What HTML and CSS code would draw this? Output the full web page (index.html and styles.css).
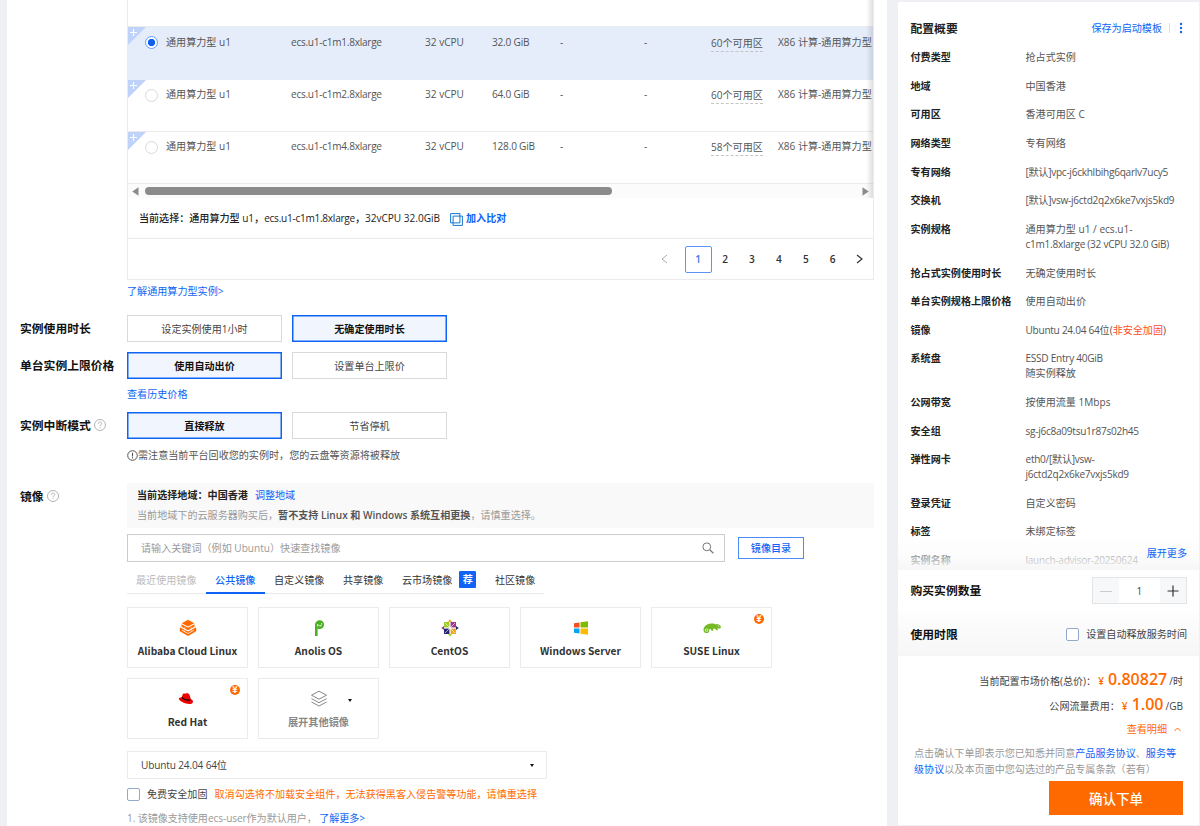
FILE: index.html
```
<!DOCTYPE html>
<html lang="zh-CN">
<head>
<meta charset="utf-8">
<title>云服务器 ECS 购买</title>
<link rel="stylesheet" href="styles.css">
</head>
<body>
<div class="main">
    <div class="spec-table">
        <div class="spec-rows">
            <div class="spec-row spacer"></div>
            <div class="spec-row selected">
                <span class="corner"><svg width="18" height="18" viewBox="0 0 18 18"><path d="M0 0H18L0 18z" fill="#bfd3fa"/><path d="M2 5.5h7M5.5 2v7" stroke="#fff" stroke-width="1.1"/></svg></span>
                <span class="name"><i class="radio on"></i>通用算力型 u1</span>
                <span class="id">ecs.u1-c1m1.8xlarge</span><span>32 vCPU</span><span class="mem">32.0 GiB</span><span>-</span><span>-</span>
                <span><u>60个可用区</u></span><span>X86 计算-通用算力型</span>
            </div>
            <div class="spec-row">
                <span class="corner"><svg width="18" height="18" viewBox="0 0 18 18"><path d="M0 0H18L0 18z" fill="#bfd3fa"/><path d="M2 5.5h7M5.5 2v7" stroke="#fff" stroke-width="1.1"/></svg></span>
                <span class="name"><i class="radio"></i>通用算力型 u1</span>
                <span class="id">ecs.u1-c1m2.8xlarge</span><span>32 vCPU</span><span class="mem">64.0 GiB</span><span>-</span><span>-</span>
                <span><u>60个可用区</u></span><span>X86 计算-通用算力型</span>
            </div>
            <div class="spec-row">
                <span class="corner"><svg width="18" height="18" viewBox="0 0 18 18"><path d="M0 0H18L0 18z" fill="#bfd3fa"/><path d="M2 5.5h7M5.5 2v7" stroke="#fff" stroke-width="1.1"/></svg></span>
                <span class="name"><i class="radio"></i>通用算力型 u1</span>
                <span class="id">ecs.u1-c1m4.8xlarge</span><span>32 vCPU</span><span class="mem">128.0 GiB</span><span>-</span><span>-</span>
                <span><u>58个可用区</u></span><span>X86 计算-通用算力型</span>
            </div>
            <div class="scrollbar">
                <svg width="7" height="9" viewBox="0 0 7 9"><path d="M6.500.3v8.400L.3 4.500z" fill="#8b8b8b"/></svg>
                <div class="track"><div class="thumb"></div></div>
                <svg width="7" height="9" viewBox="0 0 7 9"><path d="M.5.3v8.400l6.200-4.200z" fill="#8b8b8b"/></svg>
            </div>
        </div>
        <div class="current">
            <span class="current-text">当前选择：通用算力型 u1，<span class="id">ecs.u1-c1m1.8xlarge</span>，32vCPU 32.0GiB</span>
            <svg width="13" height="13" viewBox="0 0 13 13" fill="none" stroke="#1677d2"><path d="M.6.6h9.300v9.300H.6z"/><path d="M3.100 3.100h9.300v9.300H3.100z"/></svg>
            <a>加入比对</a>
        </div>
        <div class="pager">
            <span><svg width="7" height="10" viewBox="0 0 7 10" fill="none" stroke="#aaa"><path d="M6 1L1 5l5 4"/></svg></span>
            <span class="active">1</span><span>2</span><span>3</span><span>4</span><span>5</span><span>6</span>
            <span><svg width="7" height="10" viewBox="0 0 7 10" fill="none" stroke="#333" stroke-width="1.2"><path d="M1 1l5 4-5 4"/></svg></span>
        </div>
    </div>
    <a class="learn">了解通用算力型实例&gt;</a>

    <div class="field usage">
        <label>实例使用时长</label>
        <div class="options"><span>设定实例使用1小时</span><span class="active">无确定使用时长</span></div>
    </div>
    <div class="field price">
        <label>单台实例上限价格</label>
        <div class="options"><span class="active">使用自动出价</span><span>设置单台上限价</span></div>
    </div>
    <a class="history">查看历史价格</a>
    <div class="field">
        <label>实例中断模式<svg width="12" height="12" viewBox="0 0 12 12" fill="none" stroke="#b3b3b3"><circle cx="6" cy="6" r="5.5"/><path d="M4.3 4.8c0-2.3 3.4-2.2 3.4-.2C7.700 5.800 6 5.800 6 7.200M6 8.200v1"/></svg></label>
        <div class="options"><span class="active">直接释放</span><span>节省停机</span></div>
    </div>
    <div class="notice">
        <svg width="11" height="11" viewBox="0 0 11 11" fill="none" stroke="#555"><circle cx="5.500" cy="5.500" r="4.800"/><path d="M5.500 2.700v3.700M5.500 7.300v1.100" stroke-width="1.100"/></svg>需注意当前平台回收您的实例时，您的云盘等资源将被释放
    </div>

    <div class="field image">
        <label>镜像<svg width="12" height="12" viewBox="0 0 12 12" fill="none" stroke="#b3b3b3"><circle cx="6" cy="6" r="5.5"/><path d="M4.3 4.8c0-2.3 3.4-2.2 3.4-.2C7.700 5.800 6 5.800 6 7.200M6 8.200v1"/></svg></label>
        <div class="image-body">
            <div class="region">
                <p><b>当前选择地域：中国香港</b><a>调整地域</a></p>
                <p class="hint">当前地域下的云服务器购买后，<b>暂不支持 Linux 和 Windows 系统互相更换</b>，请慎重选择。</p>
            </div>
            <div class="search">
                <div class="search-box">请输入关键词（例如 Ubuntu）快速查找镜像
                    <svg width="12" height="12" viewBox="0 0 12 12" fill="none" stroke="#777"><circle cx="4.800" cy="4.800" r="3.900"/><path d="M7.700 7.700l3.700 3.600" stroke-width="1.200"/></svg>
                </div>
                <span class="catalog">镜像目录</span>
            </div>
            <div class="tabs">
                <span class="disabled">最近使用镜像</span><span class="active">公共镜像</span><span>自定义镜像</span><span>共享镜像</span><span>云市场镜像<em>荐</em></span><span>社区镜像</span>
            </div>
            <div class="cards">
                <div class="card">
                    <svg width="18" height="18" viewBox="0 0 18 18"><path d="M9 .8l6.300 3.400L9 7.600 2.700 4.200z" fill="#ff6a00"/><path d="M2.500 5.300L9 8.800l6.500-3.500v2.500L9 11.300 2.500 7.800z" fill="#ff6a00"/><path d="M.8 8.200L9 12.600l8.200-4.400v4.100L9 17 .8 12.300z" fill="#ff6a00"/><path d="M3 11.200l6 3.300 6-3.300" fill="none" stroke="#fff" stroke-width=".8"/><path d="M5.800 8v4.500M12.200 8v4.500" stroke="#fff" stroke-width=".5"/></svg>
                    <b>Alibaba Cloud Linux</b>
                </div>
                <div class="card">
                    <svg width="18" height="18" viewBox="0 0 18 18"><path d="M5 17V6.200C5 3 7.400 1.300 9.700 1.300s4.400 1.700 4.400 4.300-2 4.500-4.400 4.500c-.8 0-1.500-.1-2.100-.5V17z" fill="#4caf25"/><path d="M7.800 5v2.500M9.300 6.800h2.200M11.600 4.300v1.200" stroke="#fff" stroke-width="1.100"/></svg>
                    <b>Anolis OS</b>
                </div>
                <div class="card">
                    <svg width="18" height="18" viewBox="0 0 18 18"><path d="M3 3h5.400v5.400H3z" fill="#9ccd2a"/><path d="M9.600 3H15v5.400H9.600z" fill="#a13686"/><path d="M3 9.600h5.400V15H3z" fill="#262577"/><path d="M9.600 9.600H15V15H9.600z" fill="#efa724"/><path d="M9 .2l2 2.800H7z" fill="#efa724"/><path d="M17.800 9L15 11V7z" fill="#262577"/><path d="M9 17.800L7 15h4z" fill="#9ccd2a"/><path d="M.2 9L3 7v4z" fill="#a13686"/><path d="M4 4l10 10M14 4L4 14" stroke="#fff" stroke-width=".6"/></svg>
                    <b>CentOS</b>
                </div>
                <div class="card">
                    <svg width="18" height="18" viewBox="0 0 18 18"><path d="M2 4.300l5.500-.8v5H2z" fill="#f25022"/><path d="M8.500 3.300L16 2.200v6.300H8.500z" fill="#7fba00"/><path d="M2 9.500h5.500v5L2 13.700z" fill="#00a4ef"/><path d="M8.500 9.500H16v6.300l-7.500-1.100z" fill="#ffb900"/></svg>
                    <b>Windows Server</b>
                </div>
                <div class="card">
                    <svg width="18" height="18" viewBox="0 0 18 18"><path d="M.6 12C0 8 3.300 5 8 4.600c2.500-.2 4 .5 5.200 1l.5-.8 3.800 1.700.4 2.200c-1 1-2.600.8-3.700.7l.9 1.800h-1.700l-1.200-1.500-2.200.1.300 1.900H8.500l-.9-1.700c-.7 0-1.300.3-1.400.9.400 2-1.100 3.400-2.700 3.200C2.100 14 .9 13.300.6 12z" fill="#73ba25"/><circle cx="3.600" cy="11.200" r="1.300" fill="none" stroke="#fff" stroke-width=".7"/><circle cx="15.500" cy="7" r=".6" fill="#fff"/></svg>
                    <b>SUSE Linux</b>
                    <i class="paid">¥</i>
                </div>
                <div class="card">
                    <svg class="redhat" width="18" height="18" viewBox="0 0 18 18"><path d="M5.500 5c.4-1.600 1.500-1.800 2.800-1.300 1.500-1 3.700-.3 4.300 1.200l1.200 4.200c1.700.7 2.600 2 2 3.300-1 2.200-6.200 1.900-10.100-.1C3 11 1.200 9.200 2 8.100c.4-.6 1.300-.7 2.600-.6z" fill="#e00"/><path d="M4.700 7.400c1.900 2.200 5.300 3.200 8.600 2.500" fill="none" stroke="#111" stroke-width="1.300"/></svg>
                    <b>Red Hat</b>
                    <i class="paid">¥</i>
                </div>
                <div class="card more">
                    <svg width="18" height="18" viewBox="0 0 18 18" fill="none" stroke="#888"><path d="M9 1.200l7.500 4L9 9.200l-7.500-4z"/><path d="M1.500 8.700L9 12.700l7.500-4M1.500 12L9 16l7.500-4"/></svg>
                    <b>展开其他镜像</b>
                    <i class="caret"></i>
                </div>
            </div>
            <div class="select">Ubuntu 24.04 64位<i class="caret"></i></div>
            <div class="harden"><i class="checkbox"></i>免费安全加固<em>取消勾选将不加载安全组件，无法获得黑客入侵告警等功能，请慎重选择</em></div>
            <div class="tip">1. 该镜像支持使用ecs-user作为默认用户， <a>了解更多&gt;</a></div>
        </div>
    </div>
</div>

<div class="side">
    <div class="summary">
        <div class="summary-head">
            <h2>配置概要</h2>
            <a>保存为启动模板</a><i class="divider"></i>
            <svg width="4" height="12" viewBox="0 0 4 12" fill="#1366ec"><circle cx="2" cy="2" r="1.200"/><circle cx="2" cy="6" r="1.200"/><circle cx="2" cy="10" r="1.200"/></svg>
        </div>
        <dl>
            <dt>付费类型</dt><dd>抢占式实例</dd>
            <dt>地域</dt><dd>中国香港</dd>
            <dt>可用区</dt><dd>香港可用区 C</dd>
            <dt>网络类型</dt><dd>专有网络</dd>
            <dt>专有网络</dt><dd class="id">[默认]vpc-j6ckhlbihg6qarlv7ucy5</dd>
            <dt>交换机</dt><dd class="id">[默认]vsw-j6ctd2q2x6ke7vxjs5kd9</dd>
            <dt>实例规格</dt><dd>通用算力型 u1 / ecs.u1-<br><span class="id">c1m1.8xlarge (32 vCPU 32.0 GiB)</span></dd>
            <dt>抢占式实例使用时长</dt><dd>无确定使用时长</dd>
            <dt>单台实例规格上限价格</dt><dd>使用自动出价</dd>
            <dt>镜像</dt><dd><span class="id">Ubuntu 24.04 64</span>位(<em>非安全加固</em>)</dd>
            <dt>系统盘</dt><dd><span class="id">ESSD Entry 40GiB</span><br>随实例释放</dd>
            <dt>公网带宽</dt><dd>按使用流量 1Mbps</dd>
            <dt>安全组</dt><dd class="id">sg-j6c8a09tsu1r87s02h45</dd>
            <dt>弹性网卡</dt><dd class="id">eth0/[默认]vsw-<br>j6ctd2q2x6ke7vxjs5kd9</dd>
            <dt>登录凭证</dt><dd>自定义密码</dd>
            <dt>标签</dt><dd>未绑定标签</dd>
            <dt>实例名称</dt><dd class="id">launch-advisor-20250624</dd>
        </dl>
        <div class="fade"><a>展开更多</a></div>
    </div>
    <div class="buy">
        <div class="buy-row">
            <h2>购买实例数量</h2>
            <div class="stepper">
                <span><svg width="12" height="12" viewBox="0 0 12 12" stroke="#ccc"><path d="M0 6.500h12"/></svg></span>
                <b>1</b>
                <span><svg width="12" height="12" viewBox="0 0 12 12" stroke="#333" stroke-width="1.200"><path d="M.5 6h11M6 .5v11"/></svg></span>
            </div>
        </div>
        <div class="buy-row limit">
            <h2>使用时限</h2>
            <span class="release"><i class="checkbox"></i>设置自动释放服务时间</span>
        </div>
    </div>
    <div class="total">
        <div class="cost">当前配置市场价格(总价)：<i>¥</i><b>0.80827</b><span>/时</span></div>
        <div class="cost">公网流量费用：<i>¥</i><b>1.00</b><span>/GB</span></div>
        <div class="detail">查看明细<svg width="7" height="5" viewBox="0 0 7 5" fill="none" stroke="#ff6a00"><path d="M.5 4l3-3 3 3"/></svg></div>
        <p>点击确认下单即表示您已知悉并同意<a>产品服务协议</a>、<a>服务等<br>级协议</a>以及本页面中您勾选过的产品专属条款（若有）</p>
        <div class="submit">确认下单</div>
    </div>
</div>
</body>
</html>
```
FILE: styles.css
```
* {
    box-sizing: border-box;
}
body {
    margin: 0;
    width: 1200px;
    height: 826px;
    overflow: hidden;
    display: flex;
    background: #eff0f4;
    color: #555;
    font: 10.08px/15px "Open Sans", "Noto Sans CJK SC", sans-serif;
    white-space: nowrap;
}
a {
    color: #0f64f5;
}
i, em {
    font-style: normal;
}
h2, p, dl, dd {
    margin: 0;
}
svg {
    display: block;
    flex: none;
}
.id {
    letter-spacing: -.27px;
}
.main {
    width: 880px;
    height: 826px;
    margin-left: 7px;
    background: #fff;
    overflow: hidden;
}

/* instance table */
.spec-table {
    width: 747px;
    height: 280px;
    margin-left: 120px;
    border: 1px solid #ebebeb;
    border-top: 0;
}
.spec-rows {
    position: relative;
    overflow: hidden;
}
.spec-rows::after {
    content: "";
    position: absolute;
    top: 0;
    right: 0;
    width: 7px;
    height: 100%;
    background: linear-gradient(to right, rgba(0,0,0,0), rgba(0,0,0,.12));
}
.spec-row {
    position: relative;
    display: grid;
    grid-template-columns: 163px 134px 67px 68px 84px 67px 67px 1fr;
    height: 52px;
    padding-top: 7px;
    border-bottom: 1px solid #ebebeb;
}
.spec-row.spacer {
    height: 27px;
}
.spec-row.selected {
    height: 53px;
    padding-top: 8px;
    background: #e5edfb;
    border-bottom-color: #e5edfb;
}
.corner {
    position: absolute;
    top: 0;
    left: 0;
}
.name {
    display: flex;
    height: 16px;
    padding-left: 17px;
}
.mem {
    letter-spacing: -.2px;
}
.radio {
    width: 13px;
    height: 13px;
    margin: 2px 8px 0 0;
    border: 1px solid #d9d9d9;
    border-radius: 50%;
    background: #fff;
}
.radio.on {
    margin-top: 1px;
    border-color: #6b9ef5;
    background: radial-gradient(circle, #0f62f0 3.3px, #fff 4px);
}
.spec-row u {
    display: inline-block;
    line-height: 16px;
    text-decoration: none;
    border-bottom: 1px dashed #c5c5c5;
}
.scrollbar {
    display: flex;
    align-items: center;
    gap: 6px;
    height: 14px;
    padding: 0 4px;
    background: #fbfbfb;
}
.track {
    flex: 1;
}
.thumb {
    width: 467px;
    height: 8px;
    border-radius: 4px;
    background: #8b8b8b;
}
.current {
    display: flex;
    align-items: center;
    height: 41px;
    padding-left: 11px;
    border-bottom: 1px solid #ebebeb;
    color: #222;
    font-weight: 500;
}
.current-text {
    width: 303px;
    letter-spacing: -.02px;
}
.current svg {
    margin: 2px 3px 0 8px;
}
.current a {
    font-weight: 600;
}
.pager {
    display: flex;
    justify-content: flex-end;
    align-items: center;
    height: 40px;
    color: #333;
    font-weight: 600;
}
.pager span {
    display: flex;
    align-items: center;
    justify-content: center;
    width: 26.900px;
    height: 27px;
}
.pager span:first-child {
    margin-right: 6.500px;
}
.pager .active {
    border: 1px solid #5c95f5;
    border-radius: 2px;
    color: #3a7bf0;
}
.learn, .history {
    display: block;
    margin-left: 120px;
}
.learn {
    margin-top: 4px;
}
.history {
    margin: 8px 0 10px 120px;
}

/* form rows */
.field {
    display: flex;
    padding-left: 13px;
}
.field > label {
    display: flex;
    align-items: center;
    width: 107px;
    height: 26px;
    color: #111;
    font-size: 11.8px;
    font-weight: 600;
}
.field label svg {
    margin-left: 3.500px;
}
.usage {
    margin-top: 16px;
}
.price {
    margin-top: 10px;
}
.options {
    display: flex;
    gap: 10px;
}
.options span {
    width: 155px;
    height: 27px;
    border: 1px solid #d9d9d9;
    color: #444;
    line-height: 26px;
    text-align: center;
}
.options .active {
    border-color: #0f64f5;
    box-shadow: inset 0 0 0 .5px #0f64f5;
    background: #f1f6fe;
    color: #111;
    font-weight: 600;
}
.notice {
    display: flex;
    align-items: center;
    margin: 9px 0 20px 120px;
}

/* image picker */
.image-body {
    width: 747px;
}
.region {
    height: 45px;
    padding: 5px 10px;
    background: #f9f9f9;
}
.region p {
    height: 20px;
}
.region b {
    color: #222;
    font-weight: 600;
}
.region a {
    margin-left: 7px;
}
.region .hint {
    color: #999;
}
.region .hint b {
    color: #555;
}
.search {
    display: flex;
    align-items: center;
    gap: 13px;
    margin-top: 6px;
}
.search-box {
    display: flex;
    align-items: center;
    justify-content: space-between;
    width: 598px;
    height: 28px;
    padding: 0 10px 0 13px;
    border: 1px solid #ccc;
    color: #999;
}
.catalog {
    width: 66px;
    height: 22px;
    border: 1px solid #4c8bf5;
    color: #0f64f5;
    font-weight: 500;
    line-height: 21px;
    text-align: center;
}
.tabs {
    display: flex;
    width: 417px;
    height: 32px;
    border-bottom: 1px solid #ebebeb;
    color: #333;
}
.tabs span {
    display: flex;
    align-items: center;
    height: 32px;
    padding: 4px 9.300px 0;
}
.tabs .disabled {
    padding-left: 9px;
    color: #bbb;
}
.tabs .active {
    padding-top: 6px;
    border-bottom: 2px solid #0f64f5;
    color: #0f64f5;
    font-weight: 500;
}
.tabs em {
    width: 17px;
    height: 17px;
    margin: -1px 0 0 7px;
    border-radius: 1px;
    background: #0f64f5;
    color: #fff;
    font-weight: 700;
    line-height: 16px;
    text-align: center;
}
.cards {
    display: grid;
    grid-template-columns: repeat(5, 121px);
    gap: 10px;
    margin-top: 13px;
}
.card {
    position: relative;
    display: flex;
    flex-direction: column;
    align-items: center;
    height: 61px;
    padding-top: 11px;
    border: 1px solid #ebebeb;
    color: #333;
    font-family: "Noto Sans CJK SC", sans-serif;
}
.card b {
    margin-top: 6px;
    font-size: 10.200px;
    font-weight: 700;
}
.card.more b {
    color: #888;
}
.redhat {
    margin-left: -4px;
}
.paid {
    position: absolute;
    top: 6px;
    right: 7px;
    width: 10px;
    height: 10px;
    border-radius: 50%;
    background: #ff6a00;
    color: #fff;
    font-size: 9px;
    font-weight: 700;
    line-height: 10px;
    text-align: center;
}
.caret {
    border: 2.5px solid transparent;
    border-top: 3px solid #111;
    border-bottom: 0;
}
.card .caret {
    position: absolute;
    top: 20px;
    right: 26px;
}
.select {
    display: flex;
    align-items: center;
    justify-content: space-between;
    width: 420px;
    height: 28px;
    margin-top: 12px;
    padding: 0 12px 0 13px;
    border: 1px solid #ebebeb;
    color: #444;
    letter-spacing: -.15px;
}
.checkbox {
    width: 13px;
    height: 13px;
    border: 1px solid #93a9c9;
    border-radius: 2px;
    background: #fff;
}
.harden {
    display: flex;
    align-items: center;
    margin-top: 8px;
    color: #444;
}
.harden .checkbox {
    margin-right: 7px;
}
.harden em {
    margin-left: 7px;
    color: #ff6a00;
}
.tip {
    margin-top: 9px;
    color: #999;
    letter-spacing: -.07px;
}

/* order summary */
.side {
    width: 301px;
    height: 823px;
    margin: 2px 0 0 11px;
    background: #fff;
}
.summary {
    position: relative;
    height: 568px;
    padding: 18px 12px 0 12.500px;
    overflow: hidden;
}
.summary-head {
    display: flex;
    align-items: center;
    height: 16px;
}
h2 {
    color: #222;
    font-size: 11.8px;
    font-weight: 600;
}
.summary-head h2 {
    margin-right: auto;
}
.summary-head svg {
    margin-right: 4px;
}
.divider {
    width: 1px;
    height: 10px;
    margin: 0 9px 0 7px;
    background: #ddd;
}
dl {
    display: grid;
    grid-template-columns: 115px 1fr;
    row-gap: 13.250px;
    margin-top: 14.400px;
    line-height: 15.3px;
}
dt {
    color: #222;
    font-weight: 600;
}
dd em {
    color: #ff4c1f;
}
.fade {
    position: absolute;
    left: 0;
    right: 0;
    bottom: 0;
    height: 34px;
    padding: 10px 12px 0 0;
    background: linear-gradient(rgba(255,255,255,.2), rgba(250,250,250,.6) 60%, #f6f6f6);
    text-align: right;
}
.buy {
    height: 86px;
    padding: 7px 12px 0 12.500px;
    background: linear-gradient(#fff 40%, #f6f6f6);
}
.buy-row {
    display: flex;
    align-items: center;
    justify-content: space-between;
    height: 27px;
}
.buy h2 {
    color: #111;
}
.limit {
    margin-top: 17px;
}
.stepper {
    display: flex;
    width: 95px;
    height: 27px;
    border: 1px solid #e3e4e6;
    background: #fff;
}
.stepper span {
    display: flex;
    align-items: center;
    justify-content: center;
    width: 26px;
    background: #f7f8fa;
}
.stepper b {
    flex: 1;
    color: #444;
    font-weight: 400;
    line-height: 26px;
    text-align: center;
}
.release {
    display: flex;
    align-items: center;
    color: #444;
}
.release .checkbox {
    margin-right: 7px;
}
.total {
    padding: 11px 16px 0;
    background: #fff;
    color: #444;
}
.cost {
    display: flex;
    justify-content: flex-end;
    align-items: baseline;
    height: 25px;
    line-height: 25px;
}
.cost i {
    margin-left: 2px;
    color: #ff6a00;
    font-weight: 600;
}
.cost b {
    margin: 0 2px 0 4px;
    color: #ff6a00;
    font-size: 16px;
    font-weight: 600;
}
.detail {
    display: flex;
    justify-content: flex-end;
    align-items: center;
    height: 24px;
    padding-right: 2px;
    color: #ff6a00;
}
.detail svg {
    margin-left: 7px;
}
.total p {
    margin-top: 5px;
    color: #999;
    line-height: 15.500px;
}
.submit {
    width: 134px;
    height: 34px;
    margin: 4px 0 0 auto;
    background: #ff6a00;
    color: #fff;
    font-size: 13.500px;
    font-weight: 500;
    line-height: 36px;
    text-align: center;
}
```
